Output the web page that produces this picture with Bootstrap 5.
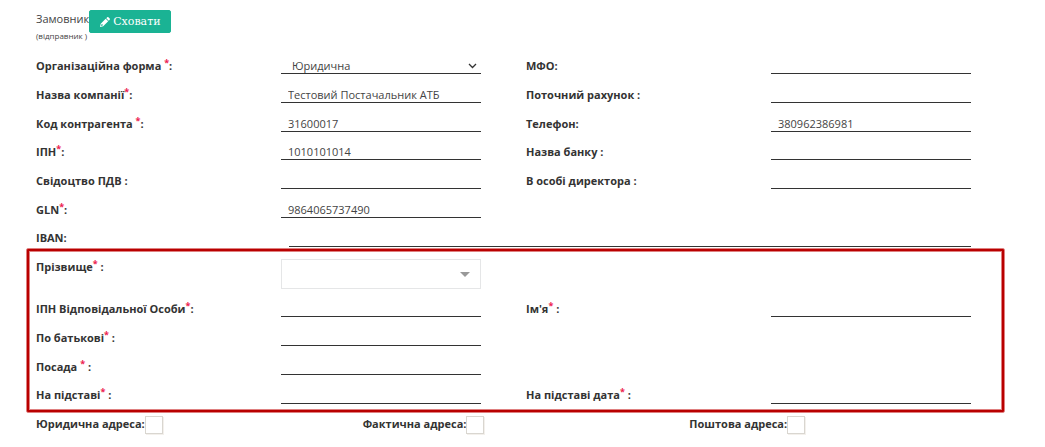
<!DOCTYPE html>
<html lang="uk">
<head>
<meta charset="utf-8">
<meta name="viewport" content="width=device-width, initial-scale=1">
<title>Замовник</title>
<link href="https://cdn.jsdelivr.net/npm/bootstrap@5.3.0/dist/css/bootstrap.min.css" rel="stylesheet">
<script src="https://cdn.jsdelivr.net/npm/bootstrap@5.3.0/dist/js/bootstrap.bundle.min.js"></script>
<style>
  body { font-family: "Open Sans", sans-serif; font-size: 11px; line-height: 24px; color: #444; background: #fff; }
  .party-form { padding: 10px 44px 0 21px; }
  .row { --bs-gutter-x: 30px; }
  .party-form > .row, .fields > .row { margin-left: 0; margin-right: 0; }
  .party-head { height: 44px; padding-left: 15px; }
  .party-name { line-height: 18px; }
  .party-name small { font-size: 8px; line-height: 16px; }
  .btn-toggle { --bs-btn-color: #fff; --bs-btn-bg: #1ab394; --bs-btn-border-color: #1ab394; --bs-btn-hover-color: #fff; --bs-btn-hover-bg: #18a689; --bs-btn-hover-border-color: #18a689; gap: 3px; height: 23px; padding: 0 9px 0 10px; border-radius: 2px; font-family: "DejaVu Serif", serif; font-size: 11px; line-height: 21px; }
  .fields > .row { height: 29px; }
  .fields > .row:nth-child(3n) { height: 28px; }
  .fields > .row.iban-row { height: 22px; }
  label { font-weight: 700; color: #333; white-space: nowrap; }
  label sup { color: #ed1c4f; font-size: 9px; top: -4px; line-height: 0; vertical-align: baseline; }
  .line-input { display: block; width: 100%; max-width: 200px; height: 16px; margin-top: 4px; padding: 0 7px; border: 0; border-bottom: 1px solid #333; border-radius: 0; background-color: #fff; color: #444; font-size: 11px; line-height: 15px; }
  select.line-input { appearance: none; padding: 0 18px 0 11px; background: #fff url("data:image/svg+xml,%3Csvg xmlns='http://www.w3.org/2000/svg' width='9' height='6'%3E%3Cpath d='M1 1l3.500 3.500L8 1' fill='none' stroke='%23333' stroke-width='1.300'/%3E%3C/svg%3E") no-repeat right 4px center; }
  .line-wide { max-width: none; width: auto; margin: 5px 15px 0 8px; }
  .highlighted { margin: 0 -4px -1px 5px; padding: 6px 3px 4px 4px; border: 1px solid #df8080; border-radius: 2px; outline: 2px solid #b90000; outline-offset: -3px; box-shadow: inset 0 0 0 3px #df8080; }
  .highlighted .row { margin-left: -10px; margin-right: 0; height: 29px; }
  .highlighted .row.surname-row { height: 42px; }
  .highlighted .row:nth-child(4) { height: 28px; }
  .highlighted .row:last-child { height: 25px; }
  .highlighted .row:last-child .line-input { margin-top: 5px; }
  .box-select { display: block; width: 100%; max-width: 200px; height: 30px; margin-top: 4px; border: 1px solid #e5e6e7; border-radius: 0; appearance: none; color: #555; background: #fff url("data:image/svg+xml,%3Csvg xmlns='http://www.w3.org/2000/svg' width='10' height='5'%3E%3Cpath d='M0 0h10L5 5z' fill='%23999'/%3E%3C/svg%3E") no-repeat right 10px center; }
  .address-check { appearance: none; width: 18px; height: 18px; margin: 4px 0 0; border: 1px solid #d9d6d0; background: #fff; box-shadow: 1px 1px 0 #f3f0ec; }
  .address-check:checked { background: #1ab394; }
</style>
</head>
<body>
<form class="party-form">
  <div class="party-head d-flex align-items-start">
    <div class="party-name d-flex flex-column"><span>Замовник</span><small>(відправник )</small></div>
    <button type="button" class="btn btn-toggle d-flex align-items-center">
      <svg width="10" height="10" viewBox="0 0 10 10" fill="#fff" aria-hidden="true"><path d="M7.200.3a1 1 0 0 1 1.200 0l1.300 1.300a1 1 0 0 1 0 1.200L8.800 3.700 6.300 1.200zM5.700 1.800l2.500 2.500-5 5L0 10l.7-3.200zM1.400 7.500 1 9l1.500-.4.5-.5-1-1z"/></svg>
      <span>Сховати</span>
    </button>
  </div>

  <div class="fields">
    <div class="row">
      <div class="col-3"><label for="form">Організаційна форма <sup>*</sup>:</label></div>
      <div class="col-3"><select class="line-input" id="form"><option>Юридична</option><option>Фізична</option></select></div>
      <div class="col-3"><label for="mfo">МФО:</label></div>
      <div class="col-3"><input class="line-input" id="mfo" type="text"></div>
    </div>
    <div class="row">
      <div class="col-3"><label for="company">Назва компанії<sup>*</sup>:</label></div>
      <div class="col-3"><input class="line-input" id="company" type="text" value="Тестовий Постачальник АТБ"></div>
      <div class="col-3"><label for="account">Поточний рахунок :</label></div>
      <div class="col-3"><input class="line-input" id="account" type="text"></div>
    </div>
    <div class="row">
      <div class="col-3"><label for="code">Код контрагента <sup>*</sup>:</label></div>
      <div class="col-3"><input class="line-input" id="code" type="text" value="31600017"></div>
      <div class="col-3"><label for="phone">Телефон:</label></div>
      <div class="col-3"><input class="line-input" id="phone" type="text" value="380962386981"></div>
    </div>
    <div class="row">
      <div class="col-3"><label for="ipn">ІПН<sup>*</sup>:</label></div>
      <div class="col-3"><input class="line-input" id="ipn" type="text" value="1010101014"></div>
      <div class="col-3"><label for="bank">Назва банку :</label></div>
      <div class="col-3"><input class="line-input" id="bank" type="text"></div>
    </div>
    <div class="row">
      <div class="col-3"><label for="vat">Свідоцтво ПДВ :</label></div>
      <div class="col-3"><input class="line-input" id="vat" type="text"></div>
      <div class="col-3"><label for="director">В особі директора :</label></div>
      <div class="col-3"><input class="line-input" id="director" type="text"></div>
    </div>
    <div class="row">
      <div class="col-3"><label for="gln">GLN<sup>*</sup>:</label></div>
      <div class="col-3"><input class="line-input" id="gln" type="text" value="9864065737490"></div>
    </div>
    <div class="row iban-row">
      <div class="col-3"><label for="iban">IBAN:</label></div>
      <div class="col-9 d-flex"><input class="line-input line-wide flex-grow-1" id="iban" type="text"></div>
    </div>
  </div>

  <div class="highlighted">
    <div class="row surname-row">
      <div class="col-3"><label for="surname">Прізвище<sup>*</sup> :</label></div>
      <div class="col-3"><select class="box-select" id="surname"><option></option></select></div>
    </div>
    <div class="row">
      <div class="col-3"><label for="person-ipn">ІПН Відповідальної Особи<sup>*</sup>:</label></div>
      <div class="col-3"><input class="line-input" id="person-ipn" type="text"></div>
      <div class="col-3"><label for="first-name">Ім'я<sup>*</sup> :</label></div>
      <div class="col-3"><input class="line-input" id="first-name" type="text"></div>
    </div>
    <div class="row">
      <div class="col-3"><label for="patronymic">По батькові<sup>*</sup> :</label></div>
      <div class="col-3"><input class="line-input" id="patronymic" type="text"></div>
    </div>
    <div class="row">
      <div class="col-3"><label for="position">Посада <sup>*</sup> :</label></div>
      <div class="col-3"><input class="line-input" id="position" type="text"></div>
    </div>
    <div class="row">
      <div class="col-3"><label for="basis">На підставі<sup>*</sup> :</label></div>
      <div class="col-3"><input class="line-input" id="basis" type="text"></div>
      <div class="col-3"><label for="basis-date">На підставі дата<sup>*</sup> :</label></div>
      <div class="col-3"><input class="line-input" id="basis-date" type="text"></div>
    </div>
  </div>

  <div class="row">
    <div class="col-4 d-flex"><label for="legal">Юридична адреса:</label><input class="address-check" id="legal" type="checkbox"></div>
    <div class="col-4 d-flex"><label for="actual">Фактична адреса:</label><input class="address-check" id="actual" type="checkbox"></div>
    <div class="col-4 d-flex"><label for="postal">Поштова адреса:</label><input class="address-check" id="postal" type="checkbox"></div>
  </div>
</form>
</body>
</html>
